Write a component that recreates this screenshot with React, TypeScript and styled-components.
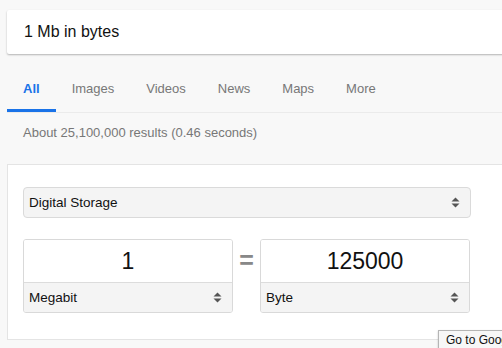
import React from 'react';
import styled, { createGlobalStyle } from 'styled-components';

const tabs = ['All', 'Images', 'Videos', 'News', 'Maps', 'More'];

export default function App() {
    return (<Page>
        <GlobalStyle />
        <SearchBox>1 Mb in bytes</SearchBox>

        <TabBar>
            {tabs.map((t, i) => <Tab key={t} active={i === 0}>{t}</Tab>)}
        </TabBar>

        <ResultStats>About 25,100,000 results (0.46 seconds)</ResultStats>

        <Card>
            <Content>
                <Select>
                    <span>Digital Storage</span>
                    <Arrows />
                </Select>
                <ConvertRow>
                    <UnitBox>
                        <Value>1</Value>
                        <UnitSelect>
                            <span>Megabit</span>
                            <Arrows />
                        </UnitSelect>
                    </UnitBox>
                    <Equals>=</Equals>
                    <UnitBox>
                        <Value>125000</Value>
                        <UnitSelect>
                            <span>Byte</span>
                            <Arrows />
                        </UnitSelect>
                    </UnitBox>
                </ConvertRow>
            </Content>
        </Card>

        <Tooltip>Go to Google Home</Tooltip>
    </Page>);
}

function Arrows() {
    return (<svg width="9" height="11" viewBox="0 0 9 11">
        <path d="M0.5 4.5 L4.5 0.5 L8.5 4.5 Z" fill="#555" />
        <path d="M0.5 6.5 L4.5 10.5 L8.5 6.5 Z" fill="#555" />
    </svg>);
}

const GlobalStyle = createGlobalStyle`
    html, body {
        margin: 0;
        padding: 0;
        background: #f8f8f8;
        overflow: hidden;
    }
    body {
        font-family: "Liberation Sans", Arial, sans-serif;
    }
`;

const Page = styled.div`
    position: relative;
    width: 502px;
    height: 348px;
    padding-left: 7px;
    box-sizing: border-box;
    overflow: hidden;
`;

const SearchBox = styled.div`
    margin-top: 10px;
    width: 520px;
    height: 44px;
    box-sizing: border-box;
    background: #fff;
    border-radius: 2px;
    box-shadow: 0 1px 2px rgba(0, 0, 0, 0.28);
    padding-left: 17px;
    display: flex;
    align-items: center;
    font-size: 16px;
    color: #111;
`;

const TabBar = styled.div`
    display: flex;
    margin-top: 27px;
    width: 520px;
    border-bottom: 1px solid #ebebeb;
`;

const Tab = styled.div<{ active?: boolean }>`
    padding: 0 16px 12px;
    line-height: 16px;
    font-size: 13px;
    color: ${p => p.active ? '#1a73e8' : '#777'};
    font-weight: ${p => p.active ? 'bold' : 'normal'};
    border-bottom: 3px solid ${p => p.active ? '#1a73e8' : 'transparent'};
`;

const ResultStats = styled.div`
    margin: 12px 0 0 16px;
    line-height: 16px;
    font-size: 13px;
    color: #777;
`;

const Card = styled.div`
    margin-top: 23px;
    width: 520px;
    background: #fff;
    border: 1px solid #e4e4e4;
    padding: 22px 15px 26px;
`;

const Content = styled.div`
    width: 448px;
    display: flex;
    flex-direction: column;
    gap: 21px;
`;

const Select = styled.div`
    height: 31px;
    box-sizing: border-box;
    background: #f4f4f4;
    border: 1px solid #dadada;
    border-radius: 4px;
    display: flex;
    align-items: center;
    justify-content: space-between;
    padding: 0 10px 0 5px;
    font-size: 13.5px;
    color: #111;
`;

const ConvertRow = styled.div`
    display: flex;
    align-items: flex-start;
`;

const UnitBox = styled.div`
    width: 210px;
    height: 74px;
    box-sizing: border-box;
    border: 1px solid #d9d9d9;
    border-radius: 3px;
    display: flex;
    flex-direction: column;
    overflow: hidden;
`;

const Value = styled.div`
    height: 42px;
    background: #fff;
    display: flex;
    align-items: center;
    justify-content: center;
    font-size: 23px;
    color: #111;
    border-bottom: 1px solid #dcdcdc;
`;

const UnitSelect = styled.div`
    flex: 1;
    background: #f4f4f4;
    display: flex;
    align-items: center;
    justify-content: space-between;
    padding: 0 10px 0 5px;
    font-size: 13.5px;
    color: #111;
`;

const Equals = styled.div`
    width: 27px;
    height: 42px;
    display: flex;
    align-items: center;
    justify-content: center;
    font-size: 25px;
    font-weight: bold;
    color: #888;
`;

const Tooltip = styled.div`
    position: absolute;
    left: 438px;
    top: 330px;
    background: #f7f7f7;
    border: 1px solid #b5b5b5;
    box-shadow: 0 1px 2px rgba(0, 0, 0, 0.2);
    padding: 2px 7px 3px;
    font-size: 12px;
    line-height: 15px;
    color: #111;
    white-space: nowrap;
`;
